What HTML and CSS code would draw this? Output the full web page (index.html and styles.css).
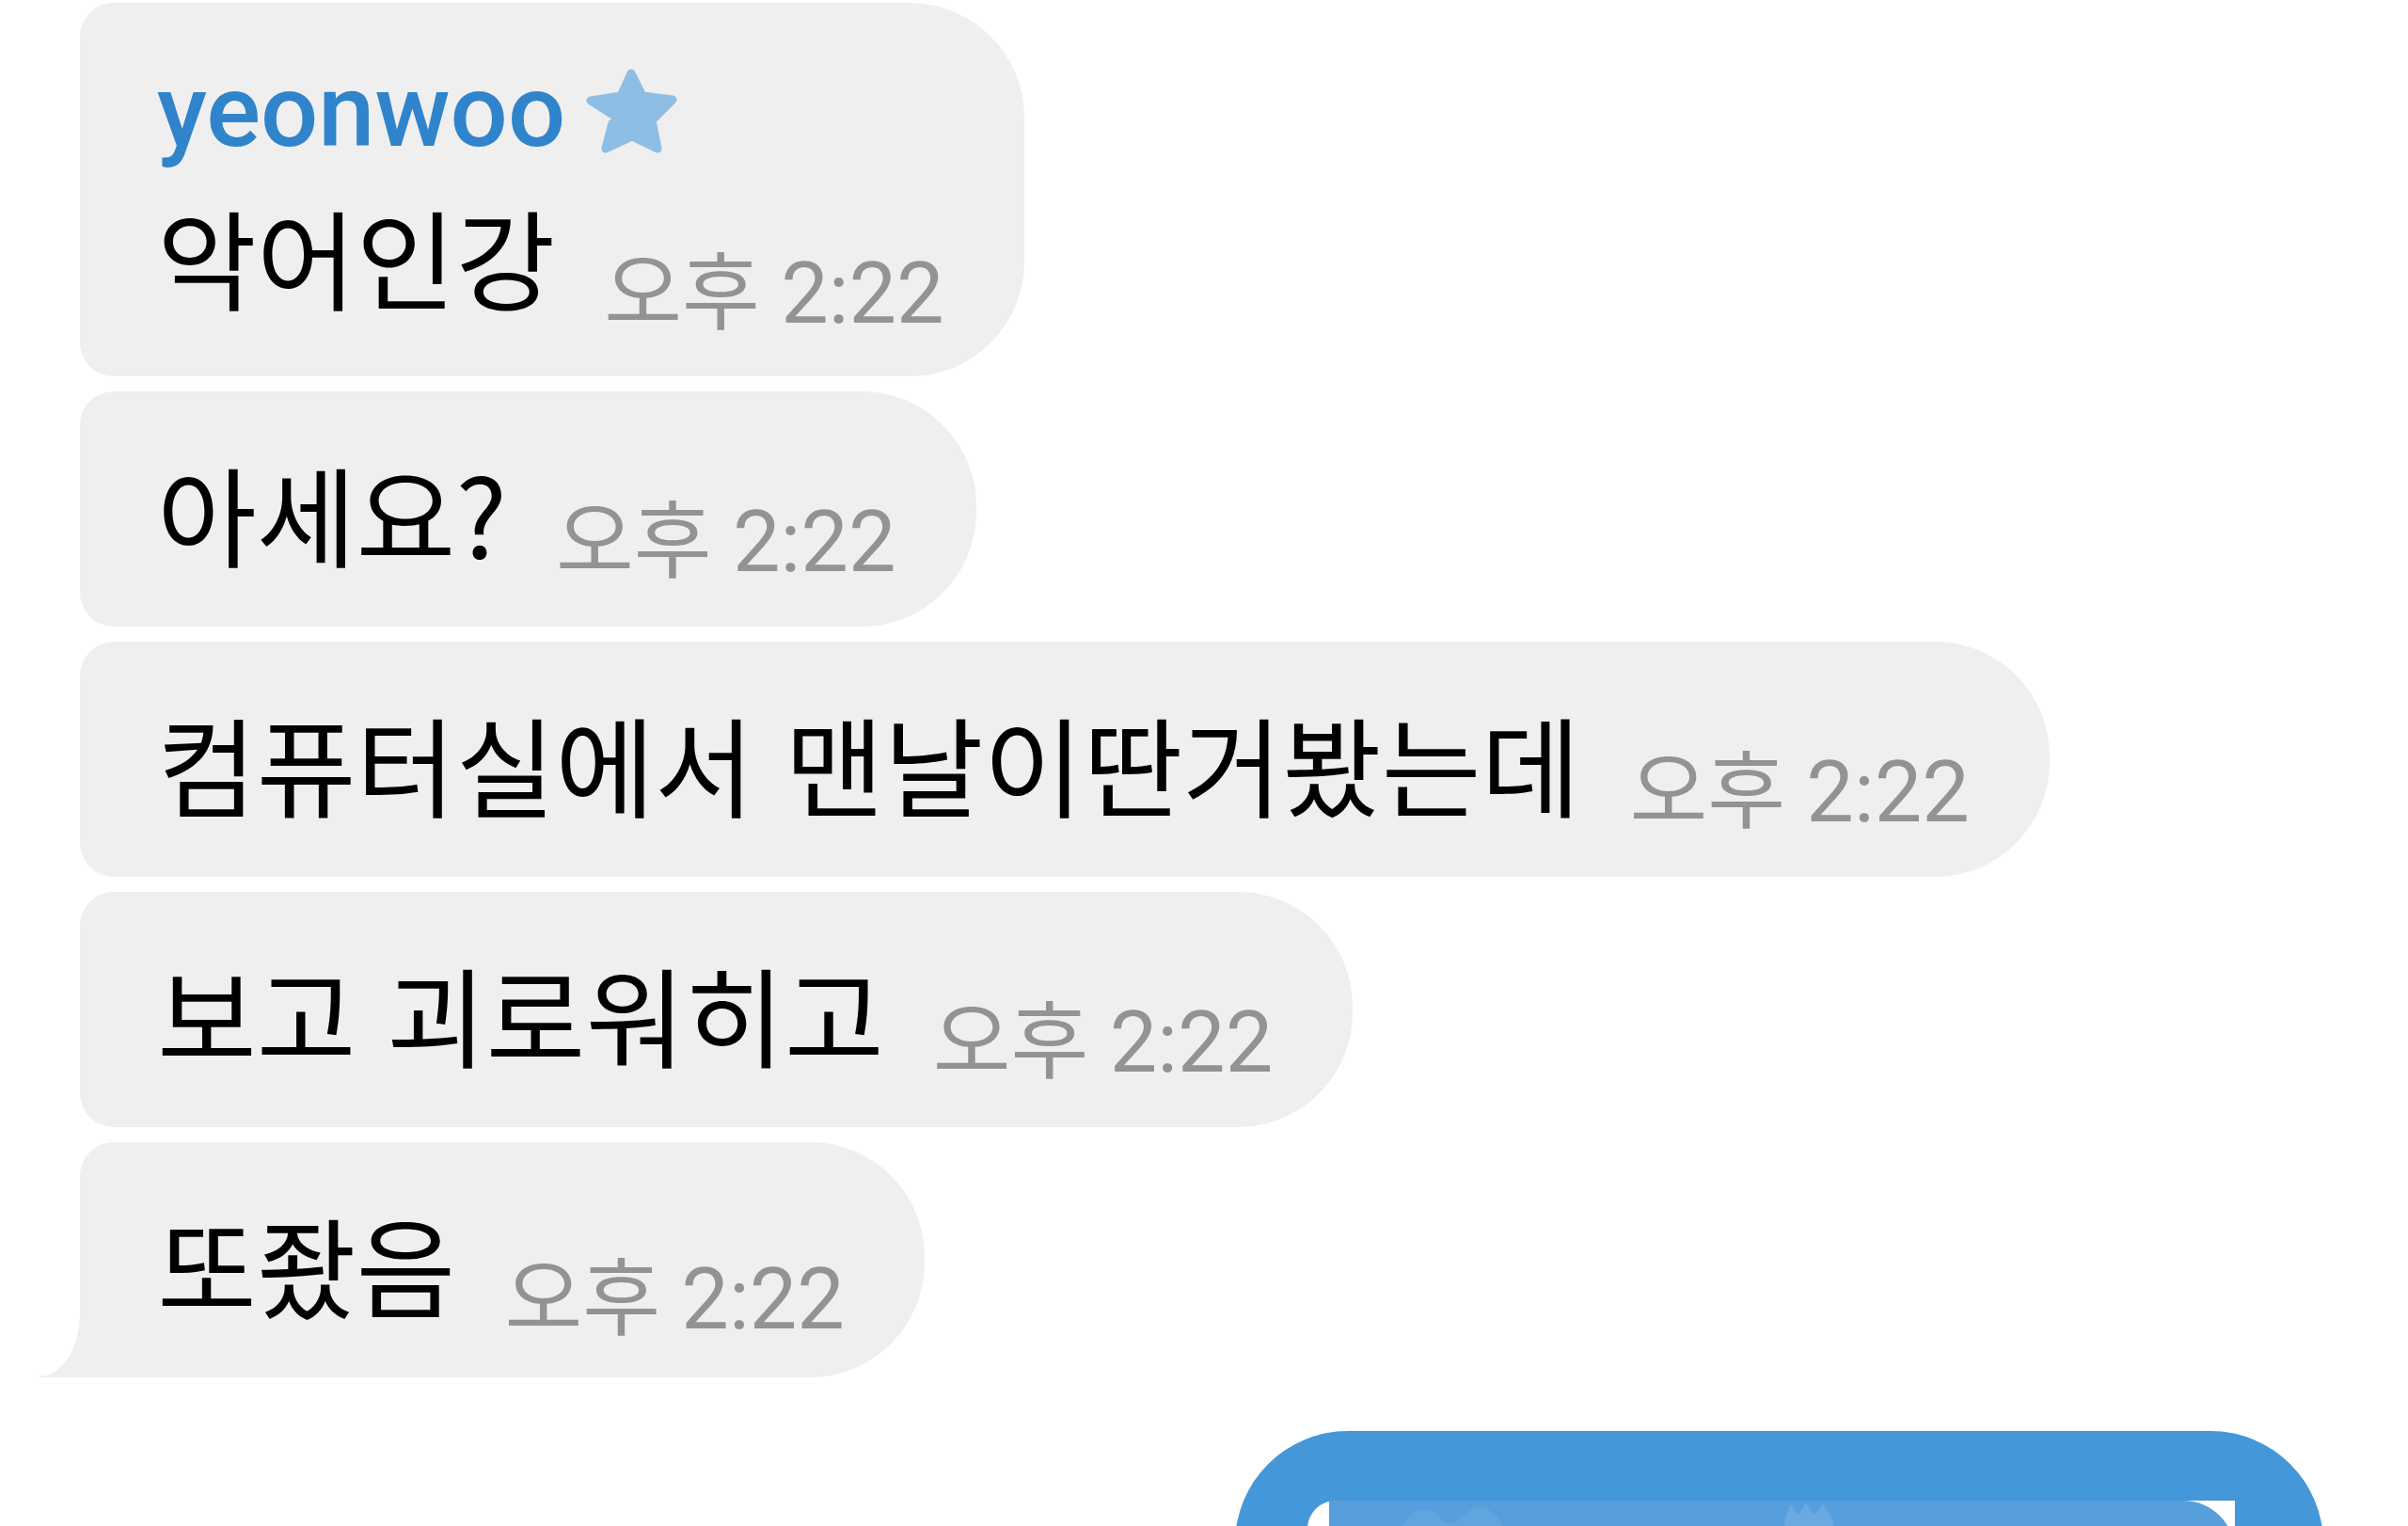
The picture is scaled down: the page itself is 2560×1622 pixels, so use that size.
FILE: index.html
```html
<!DOCTYPE html>
<html lang="ko">
<head>
<meta charset="utf-8">
<title>채팅</title>
<link rel="stylesheet" href="styles.css">
</head>
<body>
<div class="chat">
  <div class="bubble first">
    <div class="name">
      <span class="sender">yeonwoo</span>
      <svg class="star" width="100" height="90" viewBox="0 0 100 90" aria-hidden="true">
        <path d="M48 5 L60 29 L92 33 L70 55 L76 85 L49 72 L21 85 L28 58 L52 50 L30 50 L5 34 L37 29 Z"
              fill="#8fbee4" stroke="#8fbee4" stroke-width="9" stroke-linejoin="round"/>
      </svg>
    </div>
    <div class="row"><span class="msg">악어인강</span><span class="time">오후 2:22</span></div>
  </div>
  <div class="bubble">
    <div class="row"><span class="msg">아세요?</span><span class="time">오후 2:22</span></div>
  </div>
  <div class="bubble">
    <div class="row"><span class="msg">컴퓨터실에서 맨날이딴거봤는데</span><span class="time">오후 2:22</span></div>
  </div>
  <div class="bubble">
    <div class="row"><span class="msg">보고 괴로워히고</span><span class="time">오후 2:22</span></div>
  </div>
  <div class="bubble tail">
    <div class="row"><span class="msg">또좠음</span><span class="time">오후 2:22</span></div>
  </div>
  <div class="outgoing">
    <div class="reply">
      <div class="reply-body">
        <svg class="ghost ghost-a" width="130" height="40" viewBox="0 0 130 40" aria-hidden="true">
          <path d="M8 40 C10 18 22 6 40 8 C52 10 50 24 62 22 C74 20 80 4 96 6 C110 8 118 20 120 40 Z" fill="#66a8df"/>
        </svg>
        <svg class="ghost ghost-b" width="60" height="40" viewBox="0 0 60 40" aria-hidden="true">
          <path d="M4 40 C2 26 4 14 10 4 L18 16 L26 2 L34 16 L44 4 L52 16 C56 24 56 32 54 40 Z" fill="#74b0e2"/>
        </svg>
      </div>
    </div>
  </div>
</div>
</body>
</html>
```

FILE: styles.css
```css
html, body {
  margin: 0;
  padding: 0;
  background: #ffffff;
}

body {
  height: 1622px;
  overflow: hidden;
}

/* message column, clipped at the bottom of the screen */
.chat {
  box-sizing: border-box;
  height: 1622px;
  overflow: hidden;
  display: flex;
  flex-direction: column;
  align-items: flex-start;
  gap: 16px;
  padding: 3px 0 0 85px;
}

/* incoming bubble: small radius on the left, pill-shaped on the right */
.bubble {
  position: relative;
  flex: none;
  background: #efefef;
  border-radius: 36px 122px 122px 36px;
  padding: 71px 85px 64px 82px;
}

.bubble.first {
  padding-top: 55px;
  padding-bottom: 71px;
}

.name {
  display: flex;
  align-items: flex-start;
  height: 120px;
  margin-bottom: 36px;
}

.sender {
  font-family: Roboto, "Noto Sans", sans-serif;
  font-weight: 500;
  font-size: 108px;
  line-height: 120px;
  color: #2f84cb;
}

.star {
  display: block;
  margin: 15px 0 0 22px;
}

.row {
  white-space: nowrap;
  font-family: "Noto Sans CJK KR", sans-serif;
  font-weight: 400;
  font-size: 115px;
  line-height: 115px;
  height: 115px;
}

.msg {
  color: #000000;
}

.time {
  margin-left: 52px;
  font-family: Roboto, "Noto Sans CJK KR", sans-serif;
  font-weight: 400;
  font-size: 90px;
  line-height: 40px;
  color: #939393;
  vertical-align: -13px;
}

.first .time {
  vertical-align: -22px;
}

.tail .time {
  vertical-align: -20px;
}

/* last bubble of a group carries the tail at its lower left */
.bubble.tail {
  border-bottom-left-radius: 0;
}

.bubble.tail::before {
  content: "";
  position: absolute;
  left: -44px;
  bottom: 0;
  width: 44px;
  height: 64px;
  background: radial-gradient(ellipse 44px 64px at 0 0, transparent 97%, #efefef 100%);
}

/* outgoing bubble with a quoted reply */
.outgoing {
  flex: none;
  align-self: flex-end;
  box-sizing: border-box;
  width: 1157px;
  height: 400px;
  margin: 41px 90px 0 0;
  padding: 74px 94px 0 77px;
  background: #4497d8;
  border-radius: 120px 120px 0 0;
}

.reply {
  height: 300px;
  padding-left: 23px;
  background: #ffffff;
  border-top-left-radius: 30px;
}

.reply-body {
  display: flex;
  align-items: flex-start;
  height: 100%;
  background: #579fdc;
  border-top-right-radius: 55px;
}

.ghost {
  display: block;
  opacity: 0.7;
}

.ghost-a {
  margin: 2px 0 0 67px;
}

.ghost-b {
  margin: 0 0 0 284px;
}
```
